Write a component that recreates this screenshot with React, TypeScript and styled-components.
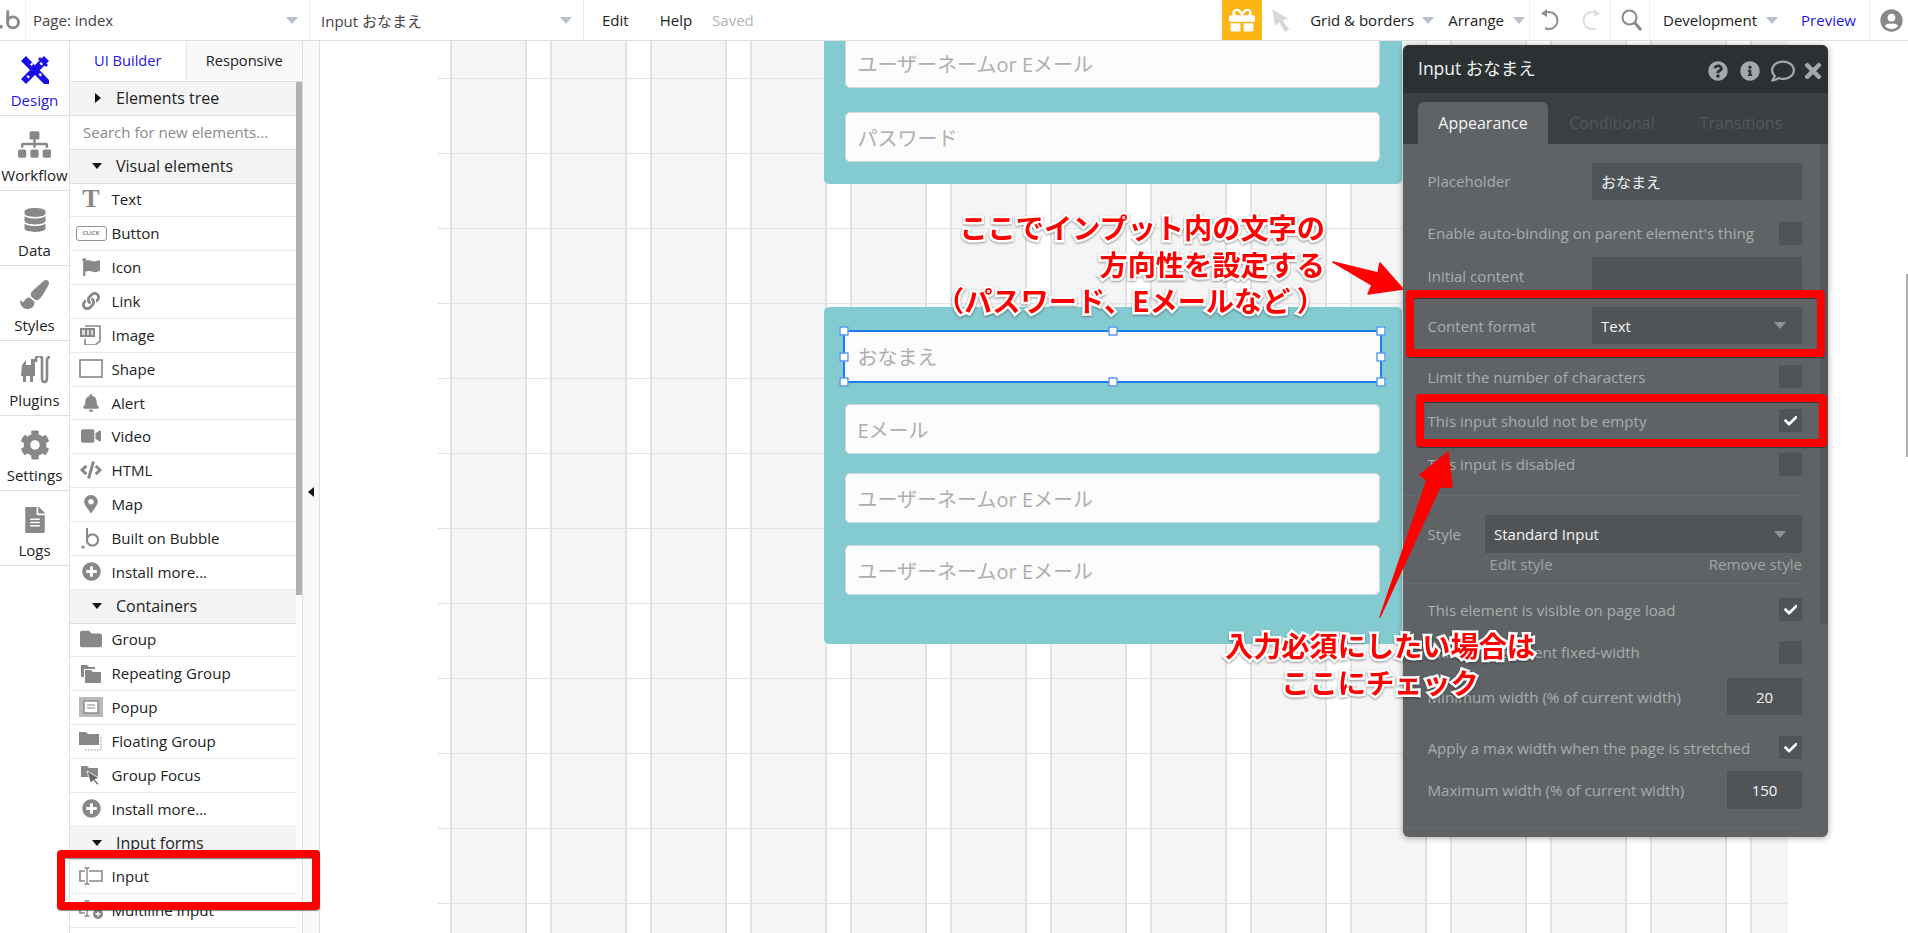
import React, { FC, ReactNode } from "react";
import styled, { createGlobalStyle } from "styled-components";
import {
  FaBell,
  FaCheck,
  FaCode,
  FaCog,
  FaDatabase,
  FaFileAlt,
  FaFlag,
  FaFolder,
  FaGift,
  FaInfoCircle,
  FaLink,
  FaMapMarkerAlt,
  FaPaintBrush,
  FaPlusCircle,
  FaQuestionCircle,
  FaRegComment,
  FaSitemap,
  FaTimes,
  FaUserCircle,
  FaVideo,
} from "react-icons/fa";

const UI_FONT = `"Open Sans", "Noto Sans CJK JP", sans-serif`;
const BLUE = "#2316e6";
const ICON = "#888888";

const GlobalStyle = createGlobalStyle`
  html, body {
    margin: 0;
    padding: 0;
    height: 100%;
    background: #fff;
    overflow: hidden;
  }
  body {
    font-family: ${UI_FONT};
    color: #222;
  }
`;

const Page = styled.div`
  position: relative;
  display: flex;
  flex-direction: column;
  width: 1908px;
  height: 933px;
  overflow: hidden;
`;

/* top bar */
const TopBar = styled.div`
  display: flex;
  align-items: center;
  flex: 0 0 41px;
  box-sizing: border-box;
  border-bottom: 1px solid #dedede;
  font-size: 15px;
`;

const LogoCell = styled.div`
  display: flex;
  align-items: center;
  width: 26px;
  height: 100%;
  box-sizing: border-box;
  border-right: 1px solid #eeeeee;
  overflow: hidden;
`;

const Selector = styled.div<{ $width: number; $pad: number }>`
  display: flex;
  align-items: center;
  justify-content: space-between;
  width: ${({ $width }) => $width}px;
  height: 100%;
  box-sizing: border-box;
  padding: 0 11px 0 ${({ $pad }) => $pad}px;
  border-right: 1px solid #eeeeee;
  color: #444;
`;

const Caret = styled.span<{ $color?: string; $left?: number }>`
  display: inline-block;
  flex: none;
  width: 0;
  height: 0;
  margin-left: ${({ $left }) => $left || 0}px;
  border-left: 6px solid transparent;
  border-right: 6px solid transparent;
  border-top: 7px solid ${({ $color }) => $color || "#b9c2cb"};
`;

const TopText = styled.span<{ $left?: number; $color?: string }>`
  flex: none;
  margin-left: ${({ $left }) => $left || 0}px;
  color: ${({ $color }) => $color || "#222"};
  white-space: nowrap;
`;

const TopGroup = styled.div`
  display: flex;
  align-items: center;
  height: 100%;
  margin-left: auto;
  padding-right: 5px;
`;

const GiftCell = styled.div`
  display: flex;
  align-items: center;
  justify-content: center;
  width: 40px;
  height: 100%;
  background: #fdb515;
  color: #fff;
  font-size: 26px;
`;

const TopSep = styled.span<{ $left: number }>`
  flex: none;
  width: 1px;
  height: 100%;
  margin-left: ${({ $left }) => $left}px;
  background: #eeeeee;
`;

const TopIcon = styled.span<{ $left: number; $color?: string }>`
  display: flex;
  flex: none;
  margin-left: ${({ $left }) => $left}px;
  color: ${({ $color }) => $color || ICON};
`;

/* main area */
const Body = styled.div`
  display: flex;
  flex: 1;
  min-height: 0;
`;

const Nav = styled.div`
  flex: 0 0 70px;
  box-sizing: border-box;
  border-right: 1px solid #dedede;
`;

const NavItem = styled.div<{ $active?: boolean }>`
  display: flex;
  flex-direction: column;
  align-items: center;
  box-sizing: border-box;
  height: 75px;
  padding-top: 11px;
  border-bottom: 1px solid #dedede;
  font-size: 15px;
  line-height: 20px;
  white-space: nowrap;
  color: ${({ $active }) => ($active ? BLUE : "#222")};
`;

const NavIconBox = styled.div`
  display: flex;
  align-items: center;
  justify-content: center;
  height: 35px;
  margin-bottom: 3px;
  color: ${ICON};
`;

const Palette = styled.div`
  position: relative;
  flex: 0 0 233px;
  box-sizing: border-box;
  border-right: 1px solid #dedede;
  overflow: hidden;
`;

const PaletteTabs = styled.div`
  display: flex;
  height: 41px;
  box-sizing: border-box;
  border-bottom: 1px solid #dedede;
  font-size: 14.6px;
`;

const PaletteTab = styled.div<{ $active?: boolean }>`
  display: flex;
  align-items: center;
  justify-content: center;
  flex: 1;
  padding-bottom: 2px;
  background: ${({ $active }) => ($active ? "#fff" : "#f8f8f8")};
  color: ${({ $active }) => ($active ? BLUE : "#222")};
  border-left: ${({ $active }) => ($active ? "0" : "1px solid #e6e6e6")};
`;

const PaletteScroll = styled.div`
  position: absolute;
  top: 41px;
  right: 0;
  width: 6px;
  height: 513px;
  background: #b0b0b0;
`;

const SectionHead = styled.div`
  display: flex;
  align-items: center;
  box-sizing: border-box;
  width: 226px;
  height: 33.85px;
  padding-left: 22px;
  border-bottom: 1px solid #dedede;
  background: #f4f4f4;
  font-size: 16px;
  color: #222;
`;

const TriDown = styled.span`
  flex: none;
  width: 0;
  height: 0;
  margin-right: 14px;
  border-left: 5px solid transparent;
  border-right: 5px solid transparent;
  border-top: 6px solid #111;
`;

const TriRight = styled.span`
  flex: none;
  width: 0;
  height: 0;
  margin: 0 15px 0 3px;
  border-top: 5px solid transparent;
  border-bottom: 5px solid transparent;
  border-left: 6px solid #111;
`;

const SearchRow = styled.div`
  display: flex;
  align-items: center;
  box-sizing: border-box;
  width: 226px;
  height: 33.85px;
  padding-left: 13px;
  border-bottom: 1px solid #dedede;
  font-size: 15px;
  color: #8a8a8a;
`;

const ElementRow = styled.div`
  display: flex;
  align-items: center;
  box-sizing: border-box;
  width: 226px;
  height: 33.85px;
  padding-bottom: 1px;
  border-bottom: 1px solid #e8e8e8;
  font-size: 15.1px;
  color: #222;
`;

const ElementIcon = styled.span`
  display: flex;
  align-items: center;
  justify-content: center;
  flex: none;
  width: 36px;
  margin: 0 2.5px 0 3px;
  color: ${ICON};
`;

const TextGlyph = styled.span`
  font-family: "Liberation Serif", serif;
  font-weight: 700;
  font-size: 26px;
  line-height: 26px;
`;

const ClickChip = styled.span`
  display: block;
  box-sizing: border-box;
  width: 31px;
  height: 15px;
  border: 1px solid #8c949c;
  border-radius: 3px;
  font-size: 6px;
  font-weight: 700;
  line-height: 13px;
  text-align: center;
  color: #888;
`;

const CollapseStrip = styled.div`
  display: flex;
  align-items: center;
  justify-content: center;
  flex: 0 0 17px;
  box-sizing: border-box;
  border-right: 1px solid #dedede;
  background: #f9f9f9;
`;

const CollapseArrow = styled.span`
  width: 0;
  height: 0;
  margin-top: 10px;
  border-top: 5px solid transparent;
  border-bottom: 5px solid transparent;
  border-right: 6px solid #111;
`;

/* canvas */
const Canvas = styled.div`
  flex: 1;
  padding-left: 118px;
  background: #fff;
  overflow: hidden;
`;

const GridSurface = styled.div`
  display: flex;
  flex-direction: column;
  width: 1350px;
  height: 100%;
  box-sizing: border-box;
  padding: 0 0 0 386px;
  background-color: #fff;
  background-image:
    linear-gradient(#e3e3e3 1px, transparent 1px),
    linear-gradient(
      to right,
      #e2e2e2 0 2px,
      #f5f5f5 2px 75.5px,
      #e2e2e2 75.5px 77px,
      #fff 77px 100px
    );
  background-size: 100% 75px, 100px 100%;
  background-position: 0 37px, 12px 0;
`;

const Card = styled.div<{ $top: number; $padTop: number; $padBottom: number }>`
  flex: none;
  width: 578px;
  box-sizing: border-box;
  margin-top: ${({ $top }) => $top}px;
  padding: ${({ $padTop }) => $padTop}px 22px ${({ $padBottom }) => $padBottom}px 20.5px;
  border-radius: 5px;
  background: #84cbd1;
`;

const FieldBox = styled.div<{ $top?: number }>`
  display: flex;
  align-items: center;
  box-sizing: border-box;
  width: 535.5px;
  height: 50px;
  margin-top: ${({ $top }) => $top || 0}px;
  padding-left: 12px;
  border: 1px solid #d4d8da;
  border-radius: 5px;
  background: #fcfcfc;
  font-size: 20px;
  color: #aeaeae;
  white-space: nowrap;
`;

const SelectedBox = styled(FieldBox)`
  position: relative;
  width: 539px;
  height: 53px;
  margin-left: -1.5px;
  padding-left: 12.5px;
  border: 2px solid #1b7df0;
  border-radius: 0;
`;

const Handle = styled.span<{ $x: number; $y: number }>`
  position: absolute;
  left: calc(${({ $x }) => $x} * (100% + 2px) - 1px);
  top: calc(${({ $y }) => $y} * (100% + 2px) - 1px);
  width: 7px;
  height: 7px;
  border: 1px solid #0f6cf0;
  background: #fff;
  transform: translate(-50%, -50%);
`;

/* property editor */
const Editor = styled.div`
  position: absolute;
  left: 1403px;
  top: 45px;
  width: 425px;
  height: 792px;
  border-radius: 6px;
  background: #5f6366;
  box-shadow: 0 1px 6px rgba(0, 0, 0, 0.35);
  overflow: hidden;
`;

const EditorHead = styled.div`
  display: flex;
  align-items: center;
  height: 48px;
  padding: 0 3px 0 15px;
  background: #2b3133;
  font-size: 17.5px;
  color: #f2f2f2;
`;

const HeadTitle = styled.span`
  flex: 1;
  padding-bottom: 3px;
`;

const HeadIcon = styled.span<{ $left: number }>`
  display: flex;
  margin: 3px 0 0 ${({ $left }) => $left}px;
  color: #a3a8aa;
`;

const EditorTabs = styled.div`
  display: flex;
  align-items: flex-end;
  height: 51px;
  padding-left: 15px;
  background: #3b4043;
  font-size: 16px;
`;

const EditorTab = styled.div<{ $active?: boolean; $width: number }>`
  display: flex;
  align-items: center;
  justify-content: center;
  width: ${({ $width }) => $width}px;
  height: 42px;
  border-radius: 6px 6px 0 0;
  background: ${({ $active }) => ($active ? "#5f6366" : "transparent")};
  color: ${({ $active }) => ($active ? "#f5f5f5" : "#53585b")};
`;

const EditorBody = styled.div`
  position: relative;
  height: 693px;
  box-sizing: border-box;
  padding: 19px 26px 0 24.5px;
  font-size: 15.1px;
  color: #a9adaf;
`;

const EditorScroll = styled.div`
  position: absolute;
  top: 0;
  right: 0;
  width: 8px;
  height: 480px;
  background: #55595c;
`;

const PropRow = styled.div<{ $top?: number; $height: number }>`
  display: flex;
  align-items: center;
  justify-content: space-between;
  height: ${({ $height }) => $height}px;
  margin-top: ${({ $top }) => $top || 0}px;
  white-space: nowrap;
`;

const PropInput = styled.div<{ $width: number; $center?: boolean; $height?: number }>`
  display: flex;
  align-items: center;
  justify-content: ${({ $center }) => ($center ? "center" : "space-between")};
  box-sizing: border-box;
  width: ${({ $width }) => $width}px;
  height: ${({ $height }) => $height || 37}px;
  padding: 0 ${({ $center }) => ($center ? 0 : 16)}px 0 ${({ $center }) => ($center ? 0 : 9)}px;
  background: #505457;
  font-size: 15px;
  color: #f4f4f4;
`;

const CheckBox = styled.span`
  display: flex;
  align-items: center;
  justify-content: center;
  flex: none;
  width: 23px;
  height: 23px;
  background: #505457;
  color: #fff;
  font-size: 13.5px;
`;

const EditorRule = styled.div<{ $top: number }>`
  height: 1px;
  margin: ${({ $top }) => $top}px -1px 0 -25px;
  background: #686c6f;
`;

const StyleLinks = styled.div`
  display: flex;
  justify-content: space-between;
  height: 18px;
  margin-top: 2px;
  padding-left: 62px;
  line-height: 18px;
  color: #a0a4a6;
`;

/* annotations drawn over the screenshot */
const Highlight = styled.div<{ $x: number; $y: number; $w: number; $h: number }>`
  position: absolute;
  left: ${({ $x }) => $x}px;
  top: ${({ $y }) => $y}px;
  width: ${({ $w }) => $w}px;
  height: ${({ $h }) => $h}px;
  box-sizing: border-box;
  border: 8px solid #ff0000;
  border-radius: 4px;
  box-shadow: 0 1px 1px rgba(0, 0, 0, 0.45), inset 0 1px 1px rgba(0, 0, 0, 0.45);
`;

const Note = styled.div<{ $x: number; $y: number; $w: number; $align: string; $lh: number }>`
  position: absolute;
  left: ${({ $x }) => $x}px;
  top: ${({ $y }) => $y}px;
  width: ${({ $w }) => $w}px;
  text-align: ${({ $align }) => $align};
  font-family: "Noto Sans CJK JP", sans-serif;
  font-size: 28.2px;
  font-weight: 700;
  line-height: ${({ $lh }) => $lh}px;
  color: #ff0000;
  white-space: pre;
  -webkit-text-stroke: 5px #fff;
  paint-order: stroke fill;
  filter: drop-shadow(0 1px 1px rgba(0, 0, 0, 0.4));
`;

const Overlay = styled.svg`
  position: absolute;
  left: 0;
  top: 0;
  pointer-events: none;
`;

const PageScroll = styled.div`
  position: absolute;
  right: 0;
  top: 274px;
  width: 2px;
  height: 183px;
  background: #b0b0b0;
`;

/* drawn icons */
const LogoMark: FC = () => (
  <svg width="26" height="40" viewBox="0 0 26 40">
    <circle cx="1" cy="27" r="2" fill="#8a8a8a" />
    <path d="M8 10 V21" stroke="#8a8a8a" strokeWidth="3" fill="none" />
    <circle cx="13.5" cy="22.5" r="5.7" stroke="#8a8a8a" strokeWidth="3" fill="none" />
  </svg>
);

const CursorMark: FC = () => (
  <svg width="19" height="24" viewBox="0 0 15 20">
    <path d="M0 1 L13 9 L8.5 10.5 L14 18 L10.5 20 L5.5 12 L2 15 Z" fill="#d9d9d9" />
  </svg>
);

const UndoMark: FC<{ color: string; flip?: boolean }> = ({ color, flip }) => (
  <svg width="21" height="22" viewBox="0 0 21 22" style={flip ? { transform: "scaleX(-1)" } : undefined}>
    <path d="M6 3.5 A8.5 8.5 0 1 1 5 19" stroke={color} strokeWidth="2" fill="none" />
    <path d="M1 4.5 L7 0 L7 8 Z" fill={color} />
  </svg>
);

const SearchMark: FC = () => (
  <svg width="21" height="22" viewBox="0 0 21 22">
    <circle cx="8.5" cy="8.5" r="7" stroke={ICON} strokeWidth="2" fill="none" />
    <path d="M13.5 13.5 L20 21" stroke={ICON} strokeWidth="3" />
  </svg>
);

const DesignMark: FC = () => (
  <svg width="30" height="30" viewBox="0 0 30 30">
    <g fill="#1a0fe8">
      <path d="M1 6 L6 1 L29 25 L29 29 L24 29 Z" />
      <path d="M29 6 L24 1 L1 24 L6 29 Z" />
      <path d="M20 2 L23 5 L21 7 L18 4 Z M25 7 L28 10 L26 12 L23 9 Z" />
    </g>
    <g fill="#fff">
      <path d="M10 9.5 L12 7.5 L13.5 9 L11.5 11 Z" />
      <path d="M20 18 L22 20 L20.5 21.5 L18.5 19.5 Z" />
      <path d="M8 20 L10 22 L8.5 23.5 L6.5 21.5 Z" />
      <path d="M21 7 L23 9 L21.5 10.5 L19.5 8.5 Z" />
    </g>
  </svg>
);

const PluginMark: FC = () => (
  <svg width="32" height="28" viewBox="0 0 32 28" fill={ICON}>
    <path d="M3 9 L7 4 V9 H12 V3 H16 V20 H2 Z" />
    <rect x="4" y="20" width="3" height="6" />
    <rect x="11" y="20" width="3" height="6" />
    <path d="M17 6 V3 Q17 0 20 0 Q23 0 23 3 V22 Q23 26 25.5 26 Q28 26 28 22 V5 Q28 1 31 1"
      stroke={ICON} strokeWidth="2.6" fill="none" />
  </svg>
);

const SmallSvg: FC<{ w?: number; h?: number; children: ReactNode }> = ({ w = 24, h = 20, children }) => (
  <svg width={w} height={h} viewBox={`0 0 ${w} ${h}`} fill={ICON}>
    {children}
  </svg>
);

const ImageMark: FC = () => (
  <SmallSvg w={22} h={20}>
    <path d="M5 1 H20 V16 L15 20 H5 V14" fill="none" stroke={ICON} strokeWidth="1.6" />
    <rect x="0" y="3" width="15" height="9" />
    <path d="M2 5 h3 v5 h-3 Z M7 5 h2 v5 h-2 Z M11 5 h2 v5 h-2 Z" fill="#ddd" />
  </SmallSvg>
);

const ShapeMark: FC = () => (
  <SmallSvg w={24} h={19}>
    <rect x="1" y="1" width="22" height="17" fill="none" stroke={ICON} strokeWidth="1.6" />
  </SmallSvg>
);

const BubbleMark: FC = () => (
  <SmallSvg w={20} h={22}>
    <circle cx="2" cy="20" r="1.6" />
    <path d="M6 1 V12" stroke={ICON} strokeWidth="2" />
    <circle cx="11.5" cy="13" r="5.6" fill="none" stroke={ICON} strokeWidth="2.2" />
  </SmallSvg>
);

const RepeatMark: FC = () => (
  <SmallSvg w={22} h={20}>
    <path d="M1 2 H7 L9 4 H15 V6 H4 V14 H1 Z" />
    <path d="M5 7 H11 L13 9 H21 V20 H5 Z" />
  </SmallSvg>
);

const PopupMark: FC = () => (
  <SmallSvg w={24} h={20}>
    <rect x="0" y="0" width="24" height="20" fill="#b9b9b9" />
    <rect x="5" y="4" width="14" height="12" fill="#fff" stroke={ICON} strokeWidth="1.4" />
    <path d="M8 8 h8 M8 11 h8" stroke={ICON} strokeWidth="1.2" />
  </SmallSvg>
);

const FloatingMark: FC = () => (
  <SmallSvg w={24} h={20}>
    <path d="M0 1 H7 L9 3 H20 V14 H0 Z" />
    <path d="M6 19 H22 V5" fill="none" stroke={ICON} strokeWidth="1" strokeDasharray="1.5 1.5" />
  </SmallSvg>
);

const FocusMark: FC = () => (
  <SmallSvg w={20} h={20}>
    <path d="M0 1 H6 L8 3 H17 V12 H0 Z" />
    <path d="M6 6 L18 13 L14 14.5 L18 19 L16 20 L12.5 15.5 L9.5 18 Z" fill="#666" stroke="#fff" strokeWidth="0.8" />
  </SmallSvg>
);

const InputMark: FC = () => (
  <SmallSvg w={24} h={18}>
    <path d="M6 4 H1 V14 H6 M10 4 H23 V14 H10" fill="none" stroke={ICON} strokeWidth="1.6" />
    <path d="M8 1 V17 M5.5 1 H10.5 M5.5 17 H10.5" stroke={ICON} strokeWidth="1.3" fill="none" />
  </SmallSvg>
);

const MultilineMark: FC = () => (
  <SmallSvg w={24} h={20}>
    <path d="M6 4 H1 V13 H6 M10 4 H18" fill="none" stroke={ICON} strokeWidth="1.6" />
    <path d="M8 1 V16 M5.5 1 H10.5 M5.5 16 H10.5" stroke={ICON} strokeWidth="1.3" fill="none" />
    <circle cx="19" cy="14" r="5" />
    <path d="M16.5 14 H21.5 M19 11.5 V16.5" stroke="#fff" strokeWidth="1.3" />
  </SmallSvg>
);

interface INavEntry {
  label: string;
  icon: ReactNode;
  active?: boolean;
}

const NAV: INavEntry[] = [
  { label: "Design", icon: <DesignMark />, active: true },
  { label: "Workflow", icon: <FaSitemap size={33} /> },
  { label: "Data", icon: <FaDatabase size={24} /> },
  { label: "Styles", icon: <FaPaintBrush size={29} /> },
  { label: "Plugins", icon: <PluginMark /> },
  { label: "Settings", icon: <FaCog size={30} /> },
  { label: "Logs", icon: <FaFileAlt size={26} /> },
];

type PaletteEntry = { section: string } | { search: string } | { label: string; icon: ReactNode };

const PALETTE: PaletteEntry[] = [
  { search: "Search for new elements..." },
  { section: "Visual elements" },
  { label: "Text", icon: <TextGlyph>T</TextGlyph> },
  { label: "Button", icon: <ClickChip>CLICK</ClickChip> },
  { label: "Icon", icon: <FaFlag size={18} /> },
  { label: "Link", icon: <FaLink size={18} /> },
  { label: "Image", icon: <ImageMark /> },
  { label: "Shape", icon: <ShapeMark /> },
  { label: "Alert", icon: <FaBell size={18} /> },
  { label: "Video", icon: <FaVideo size={20} /> },
  { label: "HTML", icon: <FaCode size={22} /> },
  { label: "Map", icon: <FaMapMarkerAlt size={18} /> },
  { label: "Built on Bubble", icon: <BubbleMark /> },
  { label: "Install more...", icon: <FaPlusCircle size={19} /> },
  { section: "Containers" },
  { label: "Group", icon: <FaFolder size={22} /> },
  { label: "Repeating Group", icon: <RepeatMark /> },
  { label: "Popup", icon: <PopupMark /> },
  { label: "Floating Group", icon: <FloatingMark /> },
  { label: "Group Focus", icon: <FocusMark /> },
  { label: "Install more...", icon: <FaPlusCircle size={19} /> },
  { section: "Input forms" },
  { label: "Input", icon: <InputMark /> },
  { label: "Multiline Input", icon: <MultilineMark /> },
];

const HANDLES: [number, number][] = [
  [0, 0],
  [0.5, 0],
  [1, 0],
  [0, 0.5],
  [1, 0.5],
  [0, 1],
  [0.5, 1],
  [1, 1],
];

const App: FC = () => (
  <Page>
    <GlobalStyle />
    <TopBar>
      <LogoCell>
        <LogoMark />
      </LogoCell>
      <Selector $width={284} $pad={7}>
        Page: index
        <Caret />
      </Selector>
      <Selector $width={274} $pad={11}>
        Input おなまえ
        <Caret />
      </Selector>
      <TopText $left={18}>Edit</TopText>
      <TopText $left={31}>Help</TopText>
      <TopText $left={20} $color="#b4b4b4">
        Saved
      </TopText>
      <TopGroup>
        <GiftCell>
          <FaGift />
        </GiftCell>
        <TopIcon $left={10}>
          <CursorMark />
        </TopIcon>
        <TopText $left={19}>Grid &amp; borders</TopText>
        <Caret $left={8} />
        <TopText $left={14}>Arrange</TopText>
        <Caret $left={9} />
        <TopSep $left={4} />
        <TopIcon $left={10}>
          <UndoMark color="#8f8f8f" />
        </TopIcon>
        <TopIcon $left={19}>
          <UndoMark color="#dedede" flip />
        </TopIcon>
        <TopSep $left={9} />
        <TopIcon $left={10}>
          <SearchMark />
        </TopIcon>
        <TopSep $left={7} />
        <TopText $left={13}>Development</TopText>
        <Caret $left={9} />
        <TopText $left={23} $color={BLUE}>
          Preview
        </TopText>
        <TopSep $left={13} />
        <TopIcon $left={10}>
          <FaUserCircle size={23} />
        </TopIcon>
      </TopGroup>
    </TopBar>

    <Body>
      <Nav>
        {NAV.map((item) => (
          <NavItem key={item.label} $active={item.active}>
            <NavIconBox>{item.icon}</NavIconBox>
            {item.label}
          </NavItem>
        ))}
      </Nav>

      <Palette>
        <PaletteTabs>
          <PaletteTab $active>UI Builder</PaletteTab>
          <PaletteTab>Responsive</PaletteTab>
        </PaletteTabs>
        <PaletteScroll />
        <SectionHead>
          <TriRight />
          Elements tree
        </SectionHead>
        {PALETTE.map((entry, i) => {
          if ("section" in entry) {
            return (
              <SectionHead key={i}>
                <TriDown />
                {entry.section}
              </SectionHead>
            );
          }
          if ("search" in entry) {
            return <SearchRow key={i}>{entry.search}</SearchRow>;
          }
          return (
            <ElementRow key={i}>
              <ElementIcon>{entry.icon}</ElementIcon>
              {entry.label}
            </ElementRow>
          );
        })}
      </Palette>

      <CollapseStrip>
        <CollapseArrow />
      </CollapseStrip>

      <Canvas>
        <GridSurface>
          <Card $top={-20} $padTop={17} $padBottom={22}>
            <FieldBox>ユーザーネームor Eメール</FieldBox>
            <FieldBox $top={24}>パスワード</FieldBox>
          </Card>
          <Card $top={123} $padTop={23} $padBottom={49}>
            <SelectedBox>
              おなまえ
              {HANDLES.map(([x, y]) => (
                <Handle key={`${x}-${y}`} $x={x} $y={y} />
              ))}
            </SelectedBox>
            <FieldBox $top={21}>Eメール</FieldBox>
            <FieldBox $top={19}>ユーザーネームor Eメール</FieldBox>
            <FieldBox $top={22}>ユーザーネームor Eメール</FieldBox>
          </Card>
        </GridSurface>
      </Canvas>
    </Body>

    <PageScroll />

    <Editor>
      <EditorHead>
        <HeadTitle>Input おなまえ</HeadTitle>
        <HeadIcon $left={0}>
          <FaQuestionCircle size={20} />
        </HeadIcon>
        <HeadIcon $left={12}>
          <FaInfoCircle size={20} />
        </HeadIcon>
        <HeadIcon $left={11}>
          <FaRegComment size={24} />
        </HeadIcon>
        <HeadIcon $left={6}>
          <FaTimes size={24} />
        </HeadIcon>
      </EditorHead>
      <EditorTabs>
        <EditorTab $active $width={130}>
          Appearance
        </EditorTab>
        <EditorTab $width={128}>Conditional</EditorTab>
        <EditorTab $width={130}>Transitions</EditorTab>
      </EditorTabs>
      <EditorBody>
        <EditorScroll />
        <PropRow $height={36}>
          Placeholder
          <PropInput $width={210}>おなまえ</PropInput>
        </PropRow>
        <PropRow $top={23} $height={22}>
          Enable auto-binding on parent element's thing
          <CheckBox />
        </PropRow>
        <PropRow $top={13} $height={37}>
          Initial content
          <PropInput $width={210} />
        </PropRow>
        <PropRow $top={13} $height={37}>
          Content format
          <PropInput $width={210}>
            Text
            <Caret $color="#8f9396" />
          </PropInput>
        </PropRow>
        <PropRow $top={21} $height={23}>
          Limit the number of characters
          <CheckBox />
        </PropRow>
        <PropRow $top={21} $height={23}>
          This input should not be empty
          <CheckBox>
            <FaCheck />
          </CheckBox>
        </PropRow>
        <PropRow $top={21} $height={22}>
          This input is disabled
          <CheckBox />
        </PropRow>
        <EditorRule $top={20} />
        <PropRow $top={19} $height={38}>
          Style
          <PropInput $width={317} $height={38}>
            Standard Input
            <Caret $color="#8f9396" />
          </PropInput>
        </PropRow>
        <StyleLinks>
          <span>Edit style</span>
          <span>Remove style</span>
        </StyleLinks>
        <EditorRule $top={10} />
        <PropRow $top={14} $height={23}>
          This element is visible on page load
          <CheckBox>
            <FaCheck />
          </CheckBox>
        </PropRow>
        <PropRow $top={20} $height={22}>
          Make this element fixed-width
          <CheckBox />
        </PropRow>
        <PropRow $top={15} $height={37}>
          Minimum width (% of current width)
          <PropInput $width={75} $center>
            20
          </PropInput>
        </PropRow>
        <PropRow $top={21} $height={23}>
          Apply a max width when the page is stretched
          <CheckBox>
            <FaCheck />
          </CheckBox>
        </PropRow>
        <PropRow $top={12} $height={38}>
          Maximum width (% of current width)
          <PropInput $width={75} $center $height={38}>
            150
          </PropInput>
        </PropRow>
        <EditorRule $top={19} />
      </EditorBody>
    </Editor>

    <Highlight $x={57} $y={850} $w={263} $h={60} />
    <Highlight $x={1406} $y={290} $w={419} $h={67} />
    <Highlight $x={1416} $y={394} $w={411} $h={53} />

    <Overlay width="1908" height="933" viewBox="0 0 1908 933">
      <g fill="#ff0000" stroke="#ff0000" strokeWidth="1.5" strokeLinejoin="round">
        <polygon points="1333,262 1378,273 1380,263 1403,289 1368,294 1372,285" />
        <polygon points="1380,617 1427,480 1420,475 1448,452 1452,487 1440,487" />
      </g>
    </Overlay>

    <Note $x={900} $y={209} $w={425} $align="right" $lh={36.5}>
      {"ここでインプット内の文字の\n方向性を設定する\n（パスワード、Eメールなど ）"}
    </Note>
    <Note $x={1180} $y={626} $w={400} $align="center" $lh={37}>
      {"入力必須にしたい場合は\nここにチェック"}
    </Note>
  </Page>
);

export default App;
